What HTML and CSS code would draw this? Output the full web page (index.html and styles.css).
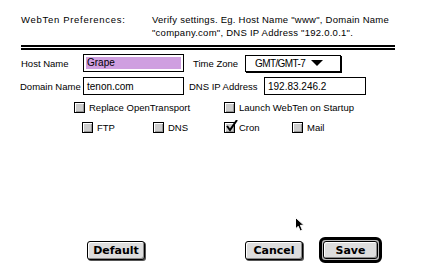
FILE: index.html
```html
<!DOCTYPE html>
<html>
<head>
<meta charset="utf-8">
<link rel="stylesheet" href="styles.css">
</head>
<body>
<div class="win">
  <div class="header">
    <div class="title">WebTen Preferences:</div>
    <div class="hint">Verify settings. Eg. Host Name "www", Domain Name<br>"company.com", DNS IP Address "192.0.0.1".</div>
  </div>
  <div class="divider"></div>
  <div class="row row1">
    <span class="lbl lbl-host">Host Name</span>
    <span class="field"><span class="sel">Grape</span></span>
    <span class="lbl lbl-tz">Time Zone</span>
    <span class="popup"><span class="ptext">GMT/GMT-7</span><svg class="tri" width="12" height="7" viewBox="0 0 12 7"><polygon points="0,0 12,0 6,6" fill="#000"/></svg></span>
  </div>
  <div class="row row2">
    <span class="lbl lbl-dom">Domain Name</span>
    <span class="field"><span class="ftext">tenon.com</span></span>
    <span class="lbl lbl-dns">DNS IP Address</span>
    <span class="field field-dns"><span class="ftext">192.83.246.2</span></span>
  </div>
  <div class="row row3">
    <span class="cb cb-wide"><span class="box"></span>Replace OpenTransport</span>
    <span class="cb"><span class="box"></span>Launch WebTen on Startup</span>
  </div>
  <div class="row row4">
    <span class="cb cb-s"><span class="box"></span>FTP</span>
    <span class="cb cb-s"><span class="box"></span>DNS</span>
    <span class="cb cb-m"><span class="box checked"><svg class="check" width="13" height="13" viewBox="0 0 13 13"><path d="M2 6 L5 10 L12 0" stroke="#000" stroke-width="2" fill="none"/></svg></span>Cron</span>
    <span class="cb"><span class="box"></span>Mail</span>
  </div>
  <div class="buttons">
    <span class="btn btn-default">Default</span>
    <span class="btn btn-cancel">Cancel</span>
    <span class="ring"><span class="btn btn-save">Save</span></span>
  </div>
  <svg class="cursor" width="10" height="15" viewBox="0 0 10 15"><polygon points="0.5,0.5 0.5,12 3.2,9.3 5.2,14 7.4,13 5.4,8.3 9,8.3" fill="#000" stroke="#fff" stroke-width="1"/></svg>
</div>
</body>
</html>
```

FILE: styles.css
```css
html, body {
  margin: 0;
  padding: 0;
  background: #fff;
}
body {
  font-family: "Liberation Sans", Arial, sans-serif;
  font-size: 9.5px;
  color: #000;
}
.win {
  position: relative;
  width: 424px;
  height: 269px;
  overflow: hidden;
}
.header {
  display: flex;
  padding: 13px 0 0 21px;
  line-height: 13px;
  height: 33px;
  box-sizing: border-box;
}
.title {
  width: 131px;
  letter-spacing: 0.7px;
}
.hint {
  letter-spacing: 0.25px;
}
.divider {
  margin: 0 0 0 21px;
  width: 374px;
  height: 1px;
  border-top: 2px solid #000;
  border-bottom: 2px solid #000;
  margin-top: 12px;
}
.row {
  display: flex;
  align-items: center;
}
.row1 {
  margin-top: 4px;
  height: 18px;
  padding-left: 21px;
}
.row2 {
  margin-top: 5px;
  height: 18px;
  padding-left: 20px;
}
.lbl-host { width: 62px; }
.lbl-tz { width: 52px; margin-left: 9px; }
.lbl-dom { width: 63px; }
.lbl-dns { width: 75px; margin-left: 5px; }
.field {
  box-sizing: border-box;
  width: 101px;
  height: 18px;
  border: 1px solid #000;
  padding: 2px;
  display: flex;
  align-items: center;
}
.field-dns { width: 102px; }
.sel {
  flex: 1;
  height: 12px;
  line-height: 12px;
  background: #cf9fe0;
  padding-left: 1px;
  font-size: 10px;
}
.ftext {
  padding-left: 1px;
  font-size: 10px;
}
.popup {
  box-sizing: border-box;
  width: 96px;
  height: 17px;
  border: 1px solid #000;
  box-shadow: 1px 1px 0 #000;
  display: flex;
  align-items: center;
  padding-left: 9px;
  margin-top: 1px;
}
.ptext {
  font-size: 10px;
  letter-spacing: -0.6px;
  width: 56px;
}
.tri { display: block; }
.row3 {
  margin-top: 6px;
  height: 12px;
  padding-left: 74px;
}
.row4 {
  margin-top: 8px;
  height: 12px;
  padding-left: 82px;
}
.cb {
  display: flex;
  align-items: center;
}
.cb-wide { width: 150px; }
.cb-s { width: 71px; }
.cb-m { width: 68px; }
.box {
  position: relative;
  box-sizing: border-box;
  width: 11px;
  height: 11px;
  border: 1px solid #000;
  background: #ccc;
  box-shadow: inset 1px 1px 0 #fff, inset -1px -1px 0 #999;
  margin-right: 4px;
}
.check {
  position: absolute;
  left: 0;
  top: -3px;
}
.buttons {
  position: relative;
  display: flex;
  align-items: center;
  margin-top: 104px;
  height: 26px;
  padding-left: 87px;
}
.btn {
  box-sizing: border-box;
  height: 19px;
  border: 1px solid #000;
  border-radius: 3px;
  background: #ddd;
  box-shadow: inset 1px 1px 0 #fff, inset -1px -1px 0 #888, 1px 1px 0 #555;
  font-family: "DejaVu Sans", sans-serif;
  font-weight: bold;
  font-size: 11px;
  display: flex;
  align-items: center;
  justify-content: center;
}
.btn-default { width: 58px; }
.btn-cancel { width: 58px; margin-left: 100px; }
.ring {
  box-sizing: border-box;
  margin-left: 16px;
  width: 63px;
  height: 26px;
  border: 3px solid #000;
  border-radius: 6px;
  background: #bbb;
  padding: 1px;
  display: flex;
}
.btn-save { width: 100%; height: 100%; box-shadow: inset 1px 1px 0 #fff, inset -1px -1px 0 #888; }
.cursor {
  position: absolute;
  left: 295px;
  top: 217px;
}
```
